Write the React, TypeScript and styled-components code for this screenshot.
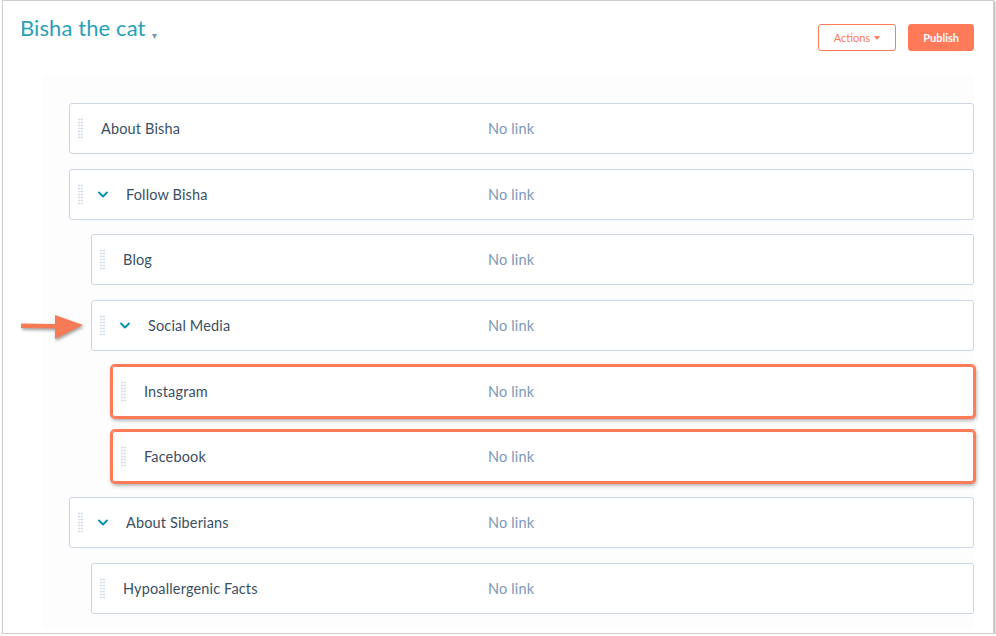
import styled, { createGlobalStyle } from 'styled-components';

const GlobalStyle = createGlobalStyle`
  html, body {
    margin: 0;
    padding: 0;
    background: #fff;
  }
  body {
    font-family: Lato, "Noto Sans", sans-serif;
    -webkit-font-smoothing: antialiased;
  }
`;

const Frame = styled.div`
  position: relative;
  box-sizing: border-box;
  width: 992px;
  height: 634px;
  margin-left: 2px;
  border: 1px solid #cfcfcf;
  background: #fff;
  box-shadow: 1px 1px 2px rgba(0, 0, 0, 0.35);
`;

const Header = styled.header`
  display: flex;
  align-items: flex-start;
  justify-content: space-between;
  padding: 13px 19px 0 17px;
  height: 60px;
  box-sizing: border-box;
`;

const Title = styled.h1`
  display: flex;
  align-items: baseline;
  gap: 6px;
  margin: 0;
  font-size: 22px;
  font-weight: 400;
  color: #2a9fb8;
  letter-spacing: 0.1px;
`;

const TitleCaret = styled.span`
  font-size: 10px;
  color: #7c98b6;
  transform: translateY(3px);
`;

const ButtonBar = styled.div`
  display: flex;
  gap: 12px;
  margin-top: 10px;
`;

const Button = styled.button<{ $primary?: boolean }>`
  display: inline-flex;
  align-items: center;
  justify-content: center;
  gap: 4px;
  height: 27px;
  padding: 0 ${(p) => (p.$primary ? '14px' : '15px')};
  border: 1px solid #ff7a59;
  border-radius: 3px;
  background: ${(p) => (p.$primary ? '#ff7a59' : '#fff')};
  color: ${(p) => (p.$primary ? '#fff' : '#ff7a59')};
  font-family: Lato, "Noto Sans", sans-serif;
  font-size: 11px;
  font-weight: ${(p) => (p.$primary ? 700 : 400)};
  cursor: pointer;
`;

const Caret = styled.span`
  width: 0;
  height: 0;
  border-left: 3.5px solid transparent;
  border-right: 3.5px solid transparent;
  border-top: 4px solid currentColor;
`;

const Panel = styled.section`
  display: flex;
  flex-direction: column;
  gap: 14.7px;
  margin: 14px 19px 0 39px;
  padding: 28px 0 15px 27px;
  background: #fdfdfe;
`;

const Row = styled.div<{ $indent: number; $highlight?: boolean }>`
  display: flex;
  align-items: center;
  box-sizing: border-box;
  height: 51px;
  margin-left: ${(p) => p.$indent}px;
  padding-left: 8px;
  background: #fff;
  border: 1px solid ${(p) => (p.$highlight ? '#ff7a59' : '#cbd6e2')};
  border-radius: 3px;
  ${(p) =>
    p.$highlight &&
    `
    outline: 2px solid #ff7a59;
    outline-offset: 0;
    box-shadow: 1px 2px 4px 1px rgba(0, 0, 0, 0.4);
  `}
`;

const Lead = styled.div<{ $width: number }>`
  display: flex;
  align-items: center;
  width: ${(p) => p.$width}px;
  flex-shrink: 0;
`;

const Handle = styled.span`
  width: 5px;
  height: 21px;
  flex-shrink: 0;
  background-image: radial-gradient(circle, #c8d5e2 0.9px, transparent 1.1px);
  background-size: 3px 3px;
  background-position: -0.5px 0;
`;

const Chevron = styled.svg`
  margin-left: 15px;
  flex-shrink: 0;
`;

const Label = styled.span`
  margin-left: 18px;
  font-size: 14.5px;
  letter-spacing: 0.15px;
  color: #3a4f63;
`;

const LinkText = styled.span`
  font-size: 14.5px;
  letter-spacing: 0.15px;
  color: #7c98b6;
`;

const Arrow = styled.svg`
  position: absolute;
  left: 14px;
  top: 310px;
  filter: drop-shadow(1px 2px 1.5px rgba(0, 0, 0, 0.35));
`;

type Item = {
  label: string;
  level: number;
  expandable?: boolean;
  highlight?: boolean;
};

const items: Item[] = [
  { label: 'About Bisha', level: 0 },
  { label: 'Follow Bisha', level: 0, expandable: true },
  { label: 'Blog', level: 1 },
  { label: 'Social Media', level: 1, expandable: true },
  { label: 'Instagram', level: 2, highlight: true },
  { label: 'Facebook', level: 2, highlight: true },
  { label: 'About Siberians', level: 0, expandable: true },
  { label: 'Hypoallergenic Facts', level: 1 },
];

const indents = [0, 22, 43];

export default function App() {
  return (
    <>
      <GlobalStyle />
      <Frame>
        <Header>
          <Title>
            Bisha the cat
            <TitleCaret>▾</TitleCaret>
          </Title>
          <ButtonBar>
            <Button>
              Actions <Caret />
            </Button>
            <Button $primary>Publish</Button>
          </ButtonBar>
        </Header>
        <Panel>
          {items.map((item) => {
            const indent = indents[item.level];
            return (
              <Row key={item.label} $indent={indent} $highlight={item.highlight}>
                <Lead $width={410 - indent}>
                  <Handle />
                  {item.expandable && (
                    <Chevron width="10" height="7" viewBox="0 0 10 7">
                      <polyline
                        points="1,1.5 5,5.5 9,1.5"
                        fill="none"
                        stroke="#0091ae"
                        strokeWidth="1.8"
                        strokeLinecap="round"
                        strokeLinejoin="round"
                      />
                    </Chevron>
                  )}
                  <Label>{item.label}</Label>
                </Lead>
                <LinkText>No link</LinkText>
              </Row>
            );
          })}
        </Panel>
        <Arrow width="70" height="32" viewBox="0 0 70 32">
          <path d="M4 12.5 L38 13 L38 4 L66 14 L38 28 L38 17.5 L4 17 Z" fill="#f47b56" />
        </Arrow>
      </Frame>
    </>
  );
}
